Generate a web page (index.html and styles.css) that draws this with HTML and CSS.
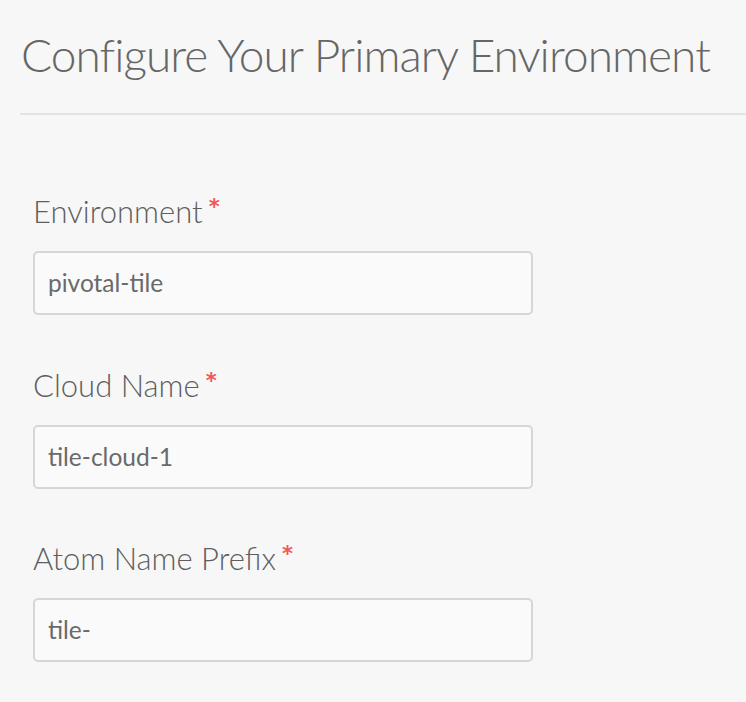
FILE: index.html
```html
<!DOCTYPE html>
<html>
<head>
<meta charset="utf-8">
<link rel="stylesheet" href="styles.css">
</head>
<body>
<div class="page">
  <h1 class="title">Configure Your Primary Environment</h1>
  <div class="rule"></div>
  <form class="form">
    <div class="field">
      <label class="label">Environment<span class="req">*</span></label>
      <div class="input">pivotal-tile</div>
    </div>
    <div class="field">
      <label class="label">Cloud Name<span class="req">*</span></label>
      <div class="input">tile-cloud-1</div>
    </div>
    <div class="field">
      <label class="label">Atom Name Prefix<span class="req">*</span></label>
      <div class="input">tile-</div>
    </div>
  </form>
</div>
</body>
</html>
```
FILE: styles.css
```css
html, body {
  margin: 0;
  padding: 0;
  background: #f7f7f7;
}
body {
  font-family: Lato, "Open Sans", sans-serif;
  color: #666;
}
.page {
  padding-left: 20px;
  overflow: hidden;
}
.title {
  margin: 0;
  padding: 27px 0 0 1px;
  font-weight: 300;
  font-size: 46px;
  line-height: 56px;
  letter-spacing: -0.95px;
  color: #666;
  white-space: nowrap;
}
.rule {
  height: 2px;
  background: #e3e3e3;
  margin-top: 30px;
}
.form {
  display: flex;
  flex-direction: column;
  gap: 51.5px;
  padding: 78px 0 0 13px;
}
.field {
  display: flex;
  flex-direction: column;
  gap: 22px;
}
.label {
  font-weight: 300;
  font-size: 31px;
  line-height: 36px;
  color: #5e5e5e;
}
.req {
  font-family: "DejaVu Sans", sans-serif;
  font-weight: bold;
  color: #f35858;
  font-size: 21px;
  line-height: 22px;
  margin-left: 6px;
  vertical-align: 9px;
}
.input {
  box-sizing: border-box;
  width: 500px;
  height: 64px;
  border: 2px solid #d6d6d6;
  border-radius: 5px;
  background: #fafafa;
  padding: 0 13px;
  font-size: 24.5px;
  line-height: 60px;
  color: #6a6a6a;
}
```
